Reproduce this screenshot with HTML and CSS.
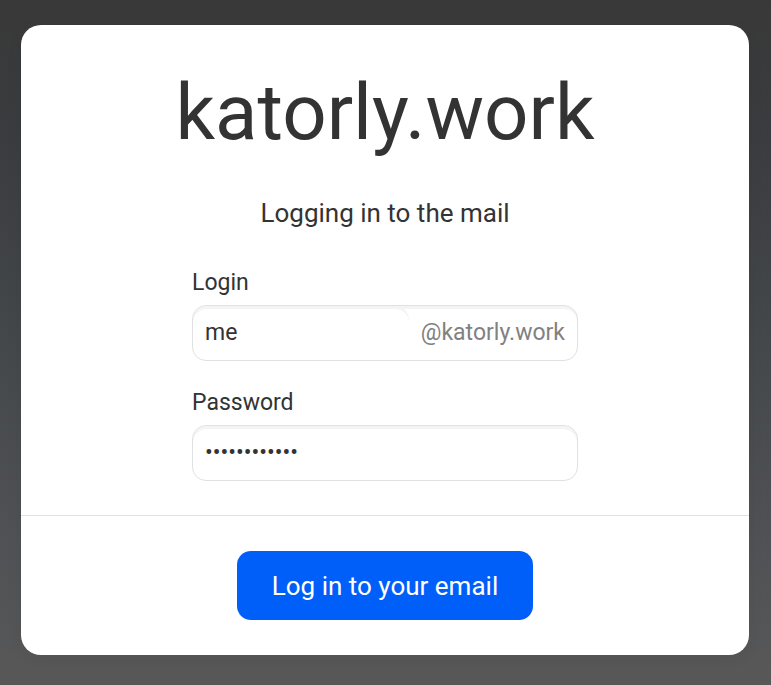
FILE: index.html
```html
<!DOCTYPE html>
<html lang="en">
<head>
<meta charset="utf-8">
<meta name="viewport" content="width=device-width, initial-scale=1">
<title>katorly.work</title>
<link rel="stylesheet" href="styles.css">
</head>
<body>
<main class="card">
  <form class="form">
    <div class="content">
      <h1 class="brand">katorly.work</h1>
      <p class="subtitle">Logging in to the mail</p>
      <div class="fields">
        <div class="field">
          <label class="label" for="login">Login</label>
          <div class="box">
            <input class="input" id="login" type="text" value="me">
            <span class="domain">@katorly.work</span>
          </div>
        </div>
        <div class="field">
          <label class="label" for="password">Password</label>
          <div class="box">
            <input class="input" id="password" type="password" value="abcdefghijkl">
          </div>
        </div>
      </div>
    </div>
    <div class="footer">
      <button class="submit" type="submit">Log in to your email</button>
    </div>
  </form>
</main>
</body>
</html>
```

FILE: styles.css
```css
* { box-sizing: border-box; }
body {
  margin: 0;
  min-height: 100vh;
  padding: 25px 22px 30px 21px;
  background: linear-gradient(#393939, #3a3c3f 20%, #45484b 50%, #505255 80%, #585858);
  font-family: Roboto, sans-serif;
  color: #333;
}
.card {
  background: #fff;
  border-radius: 20px;
  box-shadow: 0 2px 16px rgba(0, 0, 0, 0.06);
}
.content {
  padding: 42px 24px 34px;
  border-bottom: 1px solid #e1e1e1;
}
.brand {
  margin: 0;
  font-size: 78px;
  line-height: 92px;
  font-weight: 400;
  text-align: center;
}
.subtitle {
  margin: 38px 0 0;
  font-size: 26px;
  line-height: 32px;
  text-align: center;
}
.fields {
  display: grid;
  grid-template-columns: minmax(0, 1fr);
  gap: 26px;
  max-width: 386px;
  margin: 38px auto 0;
}
.label {
  display: block;
  margin-bottom: 6px;
  font-size: 23px;
  line-height: 32px;
}
.box {
  display: flex;
  align-items: center;
  height: 56px;
  border: 1px solid #e1e1e1;
  border-radius: 14px;
  box-shadow: inset 0 3px 0 #f4f4f4;
  overflow: hidden;
}
.input {
  flex: 1;
  min-width: 0;
  height: 100%;
  padding: 0 12px 2px;
  border: 0;
  border-radius: 14px;
  outline: 0;
  background: transparent;
  box-shadow: inset 0 3px 0 #f4f4f4;
  font: inherit;
  font-size: 23px;
  color: #333;
}
.domain {
  padding: 0 12px 2px;
  font-size: 23px;
  color: #818181;
}
.footer {
  display: flex;
  justify-content: center;
  padding: 35px 24px;
}
.submit {
  padding: 19px 35px 18px;
  border: 0;
  border-radius: 14px;
  background: #005ff9;
  color: #fff;
  font: inherit;
  font-size: 26px;
  line-height: 32px;
}
```
